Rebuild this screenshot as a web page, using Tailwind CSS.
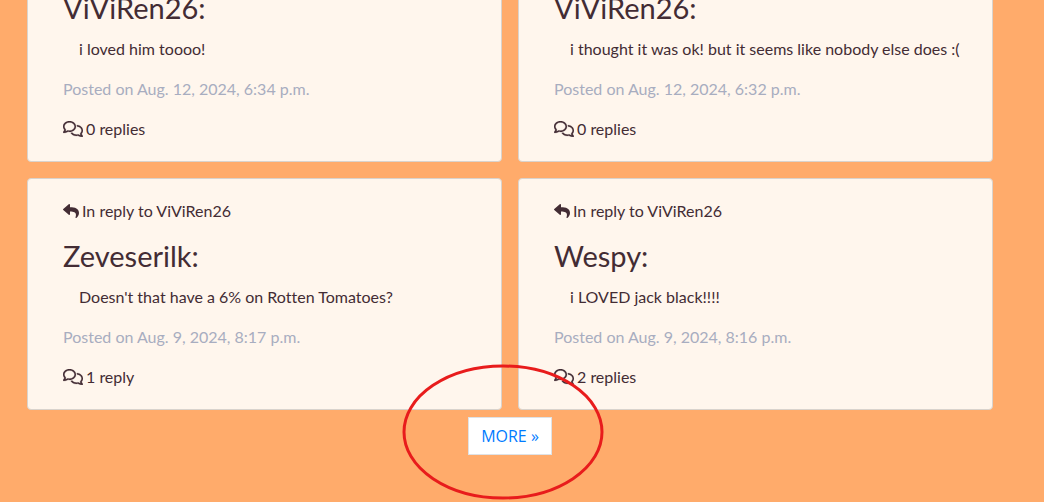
<!DOCTYPE html>
<html lang="en">
<head>
<meta charset="utf-8">
<meta name="viewport" content="width=device-width, initial-scale=1">
<title>Comments</title>
<script src="https://cdn.jsdelivr.net/npm/@tailwindcss/browser@4"></script>
</head>
<body class="min-h-screen overflow-hidden bg-[#ffab6b] font-['Lato',sans-serif] text-base text-[#432c34] [font-variant-ligatures:none]">
<svg class="hidden" aria-hidden="true">
  <symbol id="comments" viewBox="0 0 640 512"><path d="M88.2 309.1c9.8-18.3 6.8-40.8-7.5-55.8C59.4 230.9 48 204 48 176c0-63.5 63.8-128 160-128s160 64.5 160 128s-63.8 128-160 128c-13.1 0-25.8-1.3-37.8-3.6c-10.4-2-21.2-.6-30.7 4.2c-4.1 2.1-8.3 4.1-12.6 6c-16 7.2-32.9 13.5-49.9 18c2.8-4.6 5.4-9.1 7.9-13.6c1.1-1.9 2.2-3.9 3.2-5.9zM208 352c114.9 0 208-78.8 208-176S322.9 0 208 0S0 78.8 0 176c0 41.8 17.2 80.1 45.9 110.3c-.9 1.7-1.9 3.5-2.8 5.1c-10.3 18.4-22.3 36.5-36.6 52.1c-6.6 7-8.3 17.2-4.6 25.9C5.8 378.3 14.4 384 24 384c43 0 86.5-13.3 122.7-29.7c4.8-2.2 9.6-4.5 14.2-6.8c15.1 3 30.9 4.5 47.1 4.5zM432 480c16.2 0 31.9-1.6 47.1-4.5c4.6 2.3 9.4 4.6 14.2 6.8C529.5 498.7 573 512 616 512c9.6 0 18.2-5.7 22-14.5c3.8-8.8 2-19-4.6-25.9c-14.2-15.6-26.2-33.7-36.6-52.1c-.9-1.7-1.9-3.4-2.8-5.1C622.8 384.1 640 345.8 640 304c0-94.4-87.9-171.5-198.2-175.8c4.1 15.2 6.2 31.2 6.2 47.8l0 .6c87.2 6.7 144 67.5 144 127.4c0 28-11.4 54.9-32.7 77.2c-14.3 15-17.3 37.6-7.5 55.8c1.1 2 2.2 4 3.2 5.9c2.5 4.5 5.2 9 7.9 13.6c-17-4.5-33.9-10.7-49.9-18c-4.3-1.9-8.5-3.9-12.6-6c-9.5-4.8-20.3-6.2-30.7-4.2c-12.1 2.4-24.7 3.6-37.8 3.6c-61.7 0-110-26.5-136.8-62.3c-16 5.4-32.8 9.4-50 11.8C279 439.8 350 480 432 480z" stroke="currentColor" stroke-width="6"/></symbol>
  <symbol id="reply" viewBox="0 0 512 512"><path d="M8.309 189.836L184.313 37.851C199.719 24.546 224 35.347 224 56.015v80.053c160.629 1.839 288 34.032 288 186.258 0 61.441-39.581 122.309-83.333 154.132-13.653 9.931-33.111-2.533-28.077-18.631 45.344-145.012-21.507-183.51-176.59-185.742V360c0 20.7-24.3 31.453-39.687 18.164l-176.004-152c-11.071-9.562-11.086-26.753 0-36.328z"/></symbol>
</svg>
<main class="-mt-[30px] pr-[51px] pl-[27px]">
  <div class="grid grid-cols-2 gap-4">
    <article class="rounded border border-[#d9d3cd] bg-[#fff6ed] px-[35px] py-5">
      <h2 class="mb-3 text-[29px] leading-[34px]">ViViRen26:</h2>
      <p class="mb-4 pl-4">i loved him toooo!</p>
      <p class="mb-4 text-[#a8adc0]">Posted on Aug. 12, 2024, 6:34 p.m.</p>
      <p class="flex items-center gap-[3px]"><svg class="h-4 w-5 fill-current" aria-hidden="true"><use href="#comments"/></svg>0 replies</p>
    </article>
    <article class="rounded border border-[#d9d3cd] bg-[#fff6ed] px-[35px] py-5">
      <h2 class="mb-3 text-[29px] leading-[34px]">ViViRen26:</h2>
      <p class="mb-4 pl-4 whitespace-nowrap">i thought it was ok! but it seems like nobody else does :(</p>
      <p class="mb-4 text-[#a8adc0]">Posted on Aug. 12, 2024, 6:32 p.m.</p>
      <p class="flex items-center gap-[3px]"><svg class="h-4 w-5 fill-current" aria-hidden="true"><use href="#comments"/></svg>0 replies</p>
    </article>
    <article class="rounded border border-[#d9d3cd] bg-[#fff6ed] px-[35px] py-5">
      <p class="mb-4 flex items-center gap-[3px]"><svg class="size-4 fill-current" aria-hidden="true"><use href="#reply"/></svg>In reply to ViViRen26</p>
      <h2 class="mb-3 text-[29px] leading-[34px]">Zeveserilk:</h2>
      <p class="mb-4 pl-4">Doesn't that have a 6% on Rotten Tomatoes?</p>
      <p class="mb-4 text-[#a8adc0]">Posted on Aug. 9, 2024, 8:17 p.m.</p>
      <p class="flex items-center gap-[3px]"><svg class="h-4 w-5 fill-current" aria-hidden="true"><use href="#comments"/></svg>1 reply</p>
    </article>
    <article class="rounded border border-[#d9d3cd] bg-[#fff6ed] px-[35px] py-5">
      <p class="mb-4 flex items-center gap-[3px]"><svg class="size-4 fill-current" aria-hidden="true"><use href="#reply"/></svg>In reply to ViViRen26</p>
      <h2 class="mb-3 text-[29px] leading-[34px]">Wespy:</h2>
      <p class="mb-4 pl-4">i LOVED jack black!!!!</p>
      <p class="mb-4 text-[#a8adc0]">Posted on Aug. 9, 2024, 8:16 p.m.</p>
      <p class="flex items-center gap-[3px]"><svg class="h-4 w-5 fill-current" aria-hidden="true"><use href="#comments"/></svg>2 replies</p>
    </article>
  </div>
  <nav class="mt-[7px] flex justify-center" aria-label="Pagination">
    <div class="relative">
      <a href="#more" class="block border border-[#dee2e6] bg-white px-3 py-2 font-['Open_Sans',sans-serif] text-base leading-5 text-[#007bff]">MORE »</a>
      <svg class="pointer-events-none absolute top-1/2 left-1/2 h-[136px] w-[204px] -translate-x-[109px] -translate-y-[72px]" viewBox="0 0 204 136" fill="none" stroke="#e81c1c" stroke-width="3" aria-hidden="true"><ellipse cx="102" cy="68" rx="99" ry="66"/></svg>
    </div>
  </nav>
</main>
</body>
</html>
